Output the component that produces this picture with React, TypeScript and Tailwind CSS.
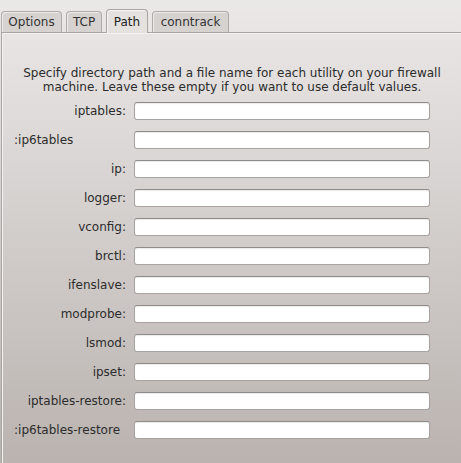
import React from 'react';

const tabs = [
  { label: 'Options', w: 'w-[61px]' },
  { label: 'TCP', w: 'w-[36px]' },
  { label: 'Path', w: 'w-[42px]', active: true },
  { label: 'conntrack', w: 'w-[77px]' },
];

const fields = [
  { label: 'iptables:' },
  { label: ':ip6tables', left: true },
  { label: 'ip:' },
  { label: 'logger:' },
  { label: 'vconfig:' },
  { label: 'brctl:' },
  { label: 'ifenslave:' },
  { label: 'modprobe:' },
  { label: 'lsmod:' },
  { label: 'ipset:' },
  { label: 'iptables-restore:' },
  { label: ':ip6tables-restore', left: true },
];

const App: React.FC = () => {
  return (
    <div
      className="w-[461px] h-[463px] overflow-hidden flex flex-col bg-gradient-to-b from-[#ebe9e8] to-[#bab3b0] text-[12px] text-[#2c2c2c]"
      style={{ fontFamily: '"DejaVu Sans", Verdana, sans-serif' }}
    >
      {/* Tab bar */}
      <div className="flex items-end gap-[4px] pl-[1px] h-[33px] relative z-10">
        {tabs.map((t) =>
          t.active ? (
            <div
              key={t.label}
              className={`${t.w} h-[24px] flex items-start justify-center pt-[3px] rounded-t-[4px] border border-b-0 border-[#a9a5a3] bg-[#e4e1df] text-[#222] shadow-[inset_1px_1px_0_#f6f5f4]`}
            >
              {t.label}
            </div>
          ) : (
            <div
              key={t.label}
              className={`${t.w} h-[21px] mb-px flex items-center justify-center rounded-t-[4px] border border-b-0 border-[#afaba9] bg-[#d6d2d0] text-[#333] shadow-[inset_1px_1px_0_#ecebea]`}
            >
              {t.label}
            </div>
          )
        )}
      </div>

      {/* Panel */}
      <div className="flex-1 ml-[1px] -mt-px border-l border-t border-[#a9a5a3] shadow-[inset_1px_1px_0_#f3f2f1] w-[480px]">
        <p className="mt-[33px] ml-[9px] w-[442px] text-center leading-[14px]">
          Specify directory path and a file name for each utility on your firewall machine. Leave these empty if you want to use default values.
        </p>

        <div className="mt-[8px] flex flex-col gap-[11px]">
          {fields.map((f) => (
            <div key={f.label} className="flex items-center h-[18px]">
              <div
                className={`w-[112px] ml-[12px] ${f.left ? 'text-left' : 'text-right'} whitespace-nowrap`}
              >
                {f.label}
              </div>
              <input
                type="text"
                className="ml-[8px] w-[296px] h-[18px] rounded-[3px] border border-[#a7a3a1] border-t-[#8f8b89] bg-white outline-none shadow-[inset_0_1px_1px_rgba(0,0,0,0.08)]"
              />
            </div>
          ))}
        </div>
      </div>
    </div>
  );
};

export default App;
